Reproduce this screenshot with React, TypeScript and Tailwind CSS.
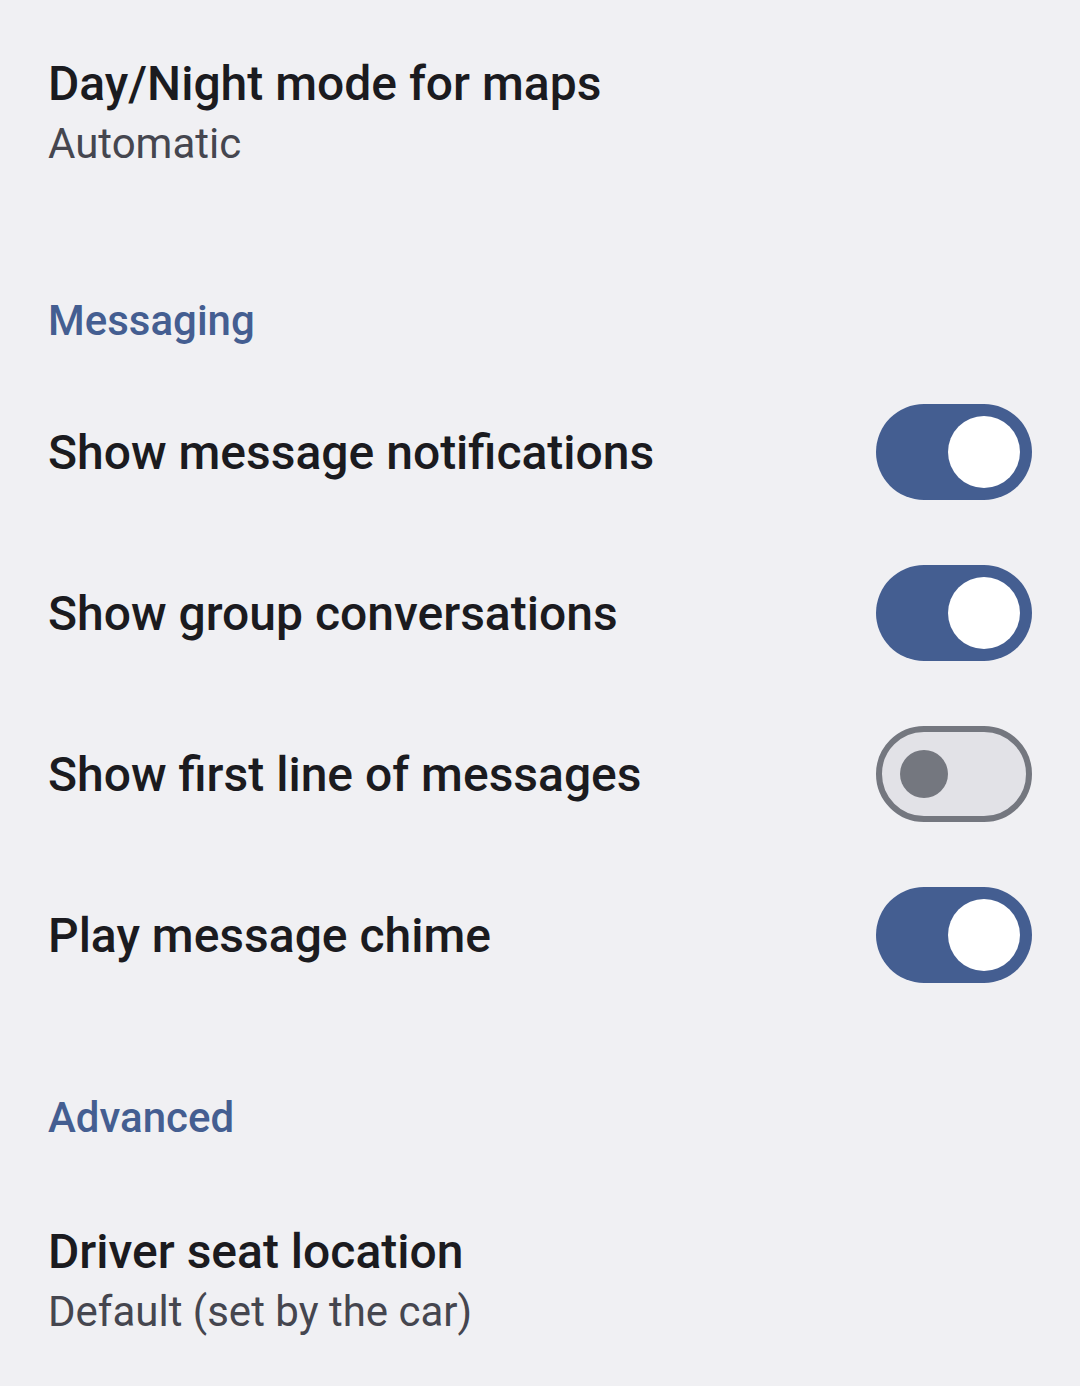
import { useState } from 'react'

type ToggleProps = {
  checked: boolean
  onChange: () => void
}

function Toggle({ checked, onChange }: ToggleProps) {
  if (checked) {
    return (
      <button
        type="button"
        onClick={onChange}
        className="flex h-[96px] w-[156px] shrink-0 items-center justify-end rounded-full bg-[#445e91] pr-[12px]"
      >
        <span className="h-[72px] w-[72px] rounded-full bg-white" />
      </button>
    )
  }
  return (
    <button
      type="button"
      onClick={onChange}
      className="flex h-[96px] w-[156px] shrink-0 items-center rounded-full border-[6px] border-[#74777f] bg-[#e2e2e7] pl-[18px]"
    >
      <span className="h-[48px] w-[48px] rounded-full bg-[#74777f]" />
    </button>
  )
}

function SectionHeader({ label }: { label: string }) {
  return <h2 className="text-[42px] font-medium leading-[60px] text-[#445e91]">{label}</h2>
}

function InfoRow({ title, summary }: { title: string; summary: string }) {
  return (
    <div>
      <p className="text-[48px] font-medium leading-[58px] text-[#1b1b1f]">{title}</p>
      <p className="text-[42px] leading-[62px] text-[#45464f]">{summary}</p>
    </div>
  )
}

export default function App() {
  const [toggles, setToggles] = useState([
    { label: 'Show message notifications', on: true },
    { label: 'Show group conversations', on: true },
    { label: 'Show first line of messages', on: false },
    { label: 'Play message chime', on: true },
  ])

  const flip = (index: number) =>
    setToggles((prev) => prev.map((t, i) => (i === index ? { ...t, on: !t.on } : t)))

  return (
    <div
      className="min-h-[1386px] w-full bg-[#f0f0f3] pl-[48px] pr-[48px] pt-[55px]"
      style={{ fontFamily: 'Roboto, "Noto Sans", sans-serif' }}
    >
      <InfoRow title="Day/Night mode for maps" summary="Automatic" />

      <div className="mt-[116px]">
        <SectionHeader label="Messaging" />
      </div>

      <div className="mt-[20px]">
        {toggles.map((item, index) => (
          <div key={item.label} className="flex h-[161px] items-center justify-between gap-6">
            <span className="pt-[3px] text-[48px] font-medium leading-[58px] text-[#1b1b1f]">{item.label}</span>
            <Toggle checked={item.on} onChange={() => flip(index)} />
          </div>
        ))}
      </div>

      <div className="mt-[73px]">
        <SectionHeader label="Advanced" />
      </div>

      <div className="mt-[75px]">
        <InfoRow title="Driver seat location" summary="Default (set by the car)" />
      </div>
    </div>
  )
}
